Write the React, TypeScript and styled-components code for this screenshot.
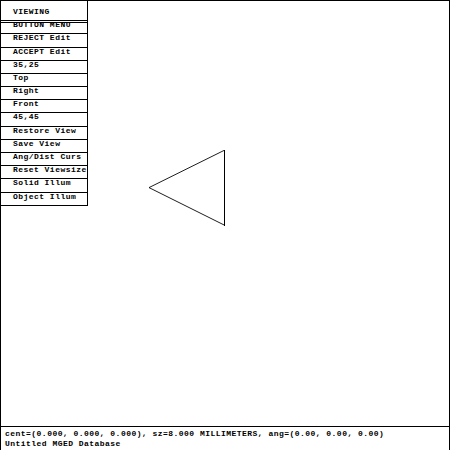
import React from 'react';
import styled, { createGlobalStyle } from 'styled-components';

const GlobalStyle = createGlobalStyle`
  * { box-sizing: border-box; }
  body { margin: 0; background: #fff; }
`;

const Window = styled.main`
  display: flex;
  flex-direction: column;
  width: 450px;
  height: 450px;
  overflow: hidden;
  border: 1px solid #000;
  border-bottom: 0;
  background: #fff;
  color: #000;
  font-family: "Liberation Mono", "Courier New", monospace;
  font-size: 8px;
  font-weight: 700;
  letter-spacing: 0.467px;
  line-height: 10px;
  white-space: pre;
`;

const Workspace = styled.div`
  display: flex;
  height: 425px;
`;

const Menu = styled.nav`
  width: 87px;
  height: 205px;
  border-right: 1px solid #000;
`;

const MenuTitle = styled.header`
  height: 22px;
  padding: 6px 0 0 12px;
  border-bottom: 3px double #000;
`;

const MenuItem = styled.div<{ $height: number }>`
  height: ${({ $height }) => $height}px;
  padding-left: 12px;
  border-bottom: 1px solid #000;
  line-height: 7px;

  &:nth-child(2) {
    overflow: hidden;
    line-height: 3px;
  }
`;

const Viewport = styled.section`
  flex: 1;
  padding: 149px 0 0 61px;
`;

const Wireframe = styled.svg`
  display: block;
`;

const StatusBar = styled.footer`
  height: 24px;
  padding: 2px 0 0 4px;
  border-top: 1px solid #000;
`;

const StatusLine = styled.div`
  height: 10px;
`;

const items: [string, number][] = [
  ['BUTTON MENU', 11],
  ['REJECT Edit', 14],
  ['ACCEPT Edit', 13],
  ['35,25', 13],
  ['Top', 13],
  ['Right', 13],
  ['Front', 13],
  ['45,45', 14],
  ['Restore View', 13],
  ['Save View', 13],
  ['Ang/Dist Curs', 13],
  ['Reset Viewsize', 13],
  ['Solid Illum', 14],
  ['Object Illum', 13],
];

export default function App() {
  return (
    <>
      <GlobalStyle />
      <Window>
        <Workspace>
          <Menu>
            <MenuTitle>VIEWING</MenuTitle>
            {items.map(([label, height]) => (
              <MenuItem key={label} $height={height}>{label}</MenuItem>
            ))}
          </Menu>
          <Viewport>
            <Wireframe width="77" height="77" viewBox="0 0 77 77" shapeRendering="crispEdges" fill="none" stroke="#000">
              <path d="M75.5 .2 0 37.6 75.5 75.2" strokeWidth="0.89" strokeLinejoin="bevel" />
              <path d="M75.5 0V76" />
            </Wireframe>
          </Viewport>
        </Workspace>
        <StatusBar>
          <StatusLine>cent=(0.000, 0.000, 0.000), sz=8.000 MILLIMETERS, ang=(0.00, 0.00, 0.00)</StatusLine>
          <StatusLine>Untitled MGED Database</StatusLine>
        </StatusBar>
      </Window>
    </>
  );
}
